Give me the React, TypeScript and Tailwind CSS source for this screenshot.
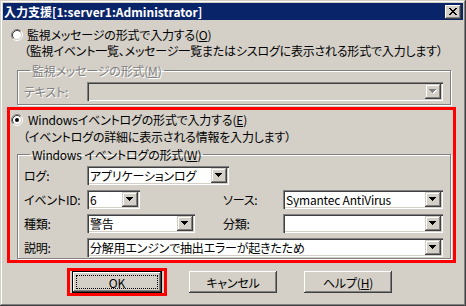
import React from "react";

const font =
  "font-['Noto_Sans_CJK_JP','Liberation_Sans',sans-serif] [font-feature-settings:'palt'] tracking-[-0.2px]";

const raised =
  "shadow-[inset_-1px_-1px_#404040,inset_1px_1px_#ffffff,inset_-2px_-2px_#808080,inset_2px_2px_#d4d0c8]";
const arrowRaised =
  "shadow-[inset_-1px_-1px_#404040,inset_1px_1px_#d4d0c8,inset_-2px_-2px_#808080,inset_2px_2px_#ffffff]";
const sunken =
  "shadow-[inset_1px_1px_#808080,inset_2px_2px_#404040,inset_-1px_-1px_#ffffff,inset_-2px_-2px_#d4d0c8]";
const etched =
  "border border-[#808080] shadow-[1px_1px_#ffffff,inset_1px_1px_#ffffff]";
const disabledText = "text-[#808080] [text-shadow:1px_1px_#ffffff]";

function Radio({ checked = false }: { checked?: boolean }) {
  return (
    <svg width="12" height="12" viewBox="0 0 12 12" className="shrink-0">
      <circle cx="6" cy="6" r="4" fill="#ffffff" />
      <path d="M2.11 9.89A5.5 5.5 0 0 1 9.89 2.11" fill="none" stroke="#808080" />
      <path d="M9.89 2.11A5.5 5.5 0 0 1 2.11 9.89" fill="none" stroke="#ffffff" />
      <path d="M2.82 9.18A4.5 4.5 0 0 1 9.18 2.82" fill="none" stroke="#404040" />
      <path d="M9.18 2.82A4.5 4.5 0 0 1 2.82 9.18" fill="none" stroke="#d4d0c8" />
      {checked && <circle cx="6" cy="6" r="2" fill="#000000" />}
    </svg>
  );
}

const tri = "M0 0h7v1h-1v1h-1v1h-1v1h-1v-1h-1v-1h-1v-1h-1z";

function DropBtn({ disabled = false }: { disabled?: boolean }) {
  return (
    <div className={`flex h-[15px] w-[16px] shrink-0 items-center justify-center bg-[#d4d0c8] ${arrowRaised}`}>
      <svg width="8" height="5" viewBox="0 0 8 5" shapeRendering="crispEdges">
        {disabled && <path d={tri} transform="translate(1 1)" fill="#ffffff" />}
        <path d={tri} fill={disabled ? "#808080" : "#000000"} />
      </svg>
    </div>
  );
}

function Combo({
  className = "",
  value = "",
  disabled = false,
}: {
  className?: string;
  value?: string;
  disabled?: boolean;
}) {
  return (
    <div className={`flex h-[19px] shrink-0 p-[2px] ${sunken} ${disabled ? "bg-[#d4d0c8]" : "bg-white"} ${className}`}>
      <div className="flex-1 overflow-hidden whitespace-nowrap pl-[1px] leading-[15px]">{value}</div>
      <DropBtn disabled={disabled} />
    </div>
  );
}

function CloseBtn() {
  const rows = ["11000011", "01100110", "00111100", "00011000", "00111100", "01100110", "11000011"];
  return (
    <div className={`flex h-[14px] w-[16px] items-center justify-center bg-[#d4d0c8] ${raised}`}>
      <svg width="8" height="7" viewBox="0 0 8 7" shapeRendering="crispEdges">
        {rows.map((r, y) =>
          r.split("").map((c, x) =>
            c === "1" ? <rect key={`${x}-${y}`} x={x} y={y} width="1" height="1" fill="#000" /> : null,
          ),
        )}
      </svg>
    </div>
  );
}

function Label({ w, children }: { w: string; children: React.ReactNode }) {
  return <span className={`shrink-0 whitespace-nowrap ${w}`}>{children}</span>;
}

export default function App() {
  return (
    <div
      className={`h-[306px] w-[466px] overflow-hidden bg-[#d4d0c8] p-[3px] text-[12px] leading-[13px] text-black ${font} shadow-[inset_-1px_-1px_#404040,inset_1px_1px_#d4d0c8,inset_-2px_-2px_#808080,inset_2px_2px_#ffffff]`}
    >
      {/* title bar */}
      <div className="flex h-[17px] items-center justify-between bg-[#0a246a] pl-[1px] pr-[2px]">
        <span className="font-bold tracking-normal text-white">入力支援[1:server1:Administrator]</span>
        <CloseBtn />
      </div>

      <div className="ml-[8px] mt-[8px] flex items-center gap-[4px]">
        <Radio />
        <span>監視メッセージの形式で入力する(<u>O</u>)</span>
      </div>
      <div className="ml-[21px] mt-[3px] whitespace-nowrap">
        （監視イベント一覧、メッセージ一覧またはシスログに表示される形式で入力します）
      </div>

      <fieldset className={`ml-[14px] mt-[7px] w-[434px] pb-[3px] pl-[6px] pt-[5px] ${etched}`}>
        <legend className={`ml-[6px] px-[2px] ${disabledText}`}>
          監視メッセージの形式(<u>M</u>)
        </legend>
        <div className="flex items-center">
          <Label w={`w-[63px] ${disabledText}`}>テキスト:</Label>
          <Combo className="w-[356px]" disabled />
        </div>
      </fieldset>

      {/* highlighted section */}
      <div className="ml-[4px] mt-[2px] w-[449px] border-[3px] border-[#ff0000] pb-[1px]">
        <div className="ml-[1px] mt-[3px] flex items-center gap-[5px]">
          <Radio checked />
          <span>Windowsイベントログの形式で入力する(<u>E</u>)</span>
        </div>
        <div className="ml-[13px] mt-[4px] whitespace-nowrap">
          （イベントログの詳細に表示される情報を入力します）
        </div>

        <fieldset className={`ml-[7px] mt-[5px] w-[434px] pb-[1px] pl-[6px] pt-[5px] ${etched}`}>
          <legend className="ml-[6px] px-[2px]">
            Windows イベントログの形式(<u>W</u>)
          </legend>
          <div className="flex flex-col gap-[5px]">
            <div className="flex items-center">
              <Label w="w-[63px]">ログ:</Label>
              <Combo className="w-[142px]" value="アプリケーションログ" />
            </div>
            <div className="flex items-center">
              <Label w="w-[63px]">イベントID:</Label>
              <Combo className="w-[53px]" value="6" />
              <Label w="ml-[83px] w-[60px]">ソース:</Label>
              <Combo className="w-[160px]" value="Symantec AntiVirus" />
            </div>
            <div className="flex items-center">
              <Label w="w-[63px]">種類:</Label>
              <Combo className="w-[108px]" value="警告" />
              <Label w="ml-[28px] w-[60px]">分類:</Label>
              <Combo className="w-[160px]" />
            </div>
            <div className="flex items-center">
              <Label w="w-[63px]">説明:</Label>
              <Combo className="w-[356px]" value="分解用エンジンで抽出エラーが起きたため" />
            </div>
          </div>
        </fieldset>
      </div>

      {/* buttons */}
      <div className="ml-[64px] mt-[5px] flex items-center">
        <div className="border-[3px] border-[#ff0000] px-[2px] py-[0px]">
          <button className="block h-[22px] w-[90px] border border-black bg-[#d4d0c8]">
            <div className={`h-full w-full p-[3px] ${raised}`}>
              <div className="flex h-full w-full items-center justify-center border border-dotted border-black">
                OK
              </div>
            </div>
          </button>
        </div>
        <button className={`ml-[22px] flex h-[22px] w-[88px] items-center justify-center bg-[#d4d0c8] ${raised}`}>
          キャンセル
        </button>
        <button className={`ml-[27px] flex h-[22px] w-[88px] items-center justify-center bg-[#d4d0c8] ${raised}`}>
          ヘルプ(<u>H</u>)
        </button>
      </div>
    </div>
  );
}
